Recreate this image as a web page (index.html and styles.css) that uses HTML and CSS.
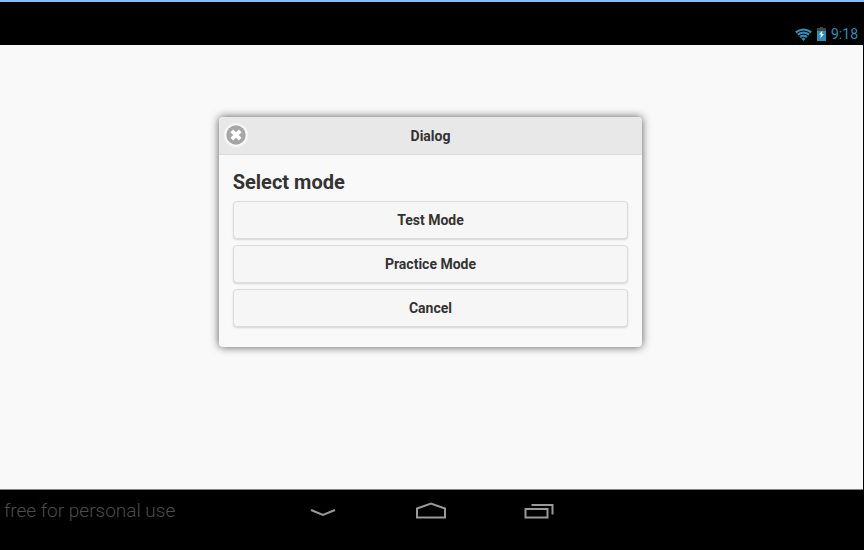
FILE: index.html
```html
<!DOCTYPE html>
<html lang="en">
<head>
<meta charset="utf-8">
<title>Dialog</title>
<link rel="stylesheet" href="styles.css">
</head>
<body>
<header class="status-bar">
  <svg class="wifi" viewBox="0 0 17 13" aria-hidden="true">
    <path class="wifi-fill" d="M0 3.6Q8.500-2.800 17 3.600L8.500 13Z"/>
    <path class="wifi-gap" d="M1.500 5.700Q8.500 0.400 15.500 5.700M3.500 8.200Q8.500 4 13.500 8.200M5.600 10.500Q8.500 8 11.400 10.500"/>
  </svg>
  <svg class="battery" viewBox="0 0 9 14" aria-hidden="true">
    <path fill="#454545" d="M3 0h3v1h3v4H0V1h3z"/>
    <path fill="#2e8fb5" d="M0 4h9v10H0z"/>
    <path fill="#e8f4f8" d="M5.500 3.500L2 7.500h2L3.200 11.500L7 7H5z"/>
  </svg>
  <time class="clock">9:18</time>
</header>
<main class="screen">
  <section class="dialog" role="dialog" aria-labelledby="dialog-title">
    <div class="dialog-header">
      <button class="close" type="button" aria-label="Close">
        <svg viewBox="0 0 24 24" aria-hidden="true">
          <circle cx="12" cy="12" r="12" fill="#f6f6f6"/>
          <circle cx="12" cy="12" r="9.700" fill="#a6a6a6"/>
          <path d="M7.800 7.800l8.400 8.400M16.200 7.800l-8.400 8.400" stroke="#fff" stroke-width="3.800"/>
        </svg>
      </button>
      <h1 class="dialog-title" id="dialog-title">Dialog</h1>
    </div>
    <div class="dialog-body">
      <h2 class="prompt">Select mode</h2>
      <div class="choices">
        <button class="choice" type="button">Test Mode</button>
        <button class="choice" type="button">Practice Mode</button>
        <button class="choice" type="button">Cancel</button>
      </div>
    </div>
  </section>
</main>
<footer class="nav-bar">
  <span class="license">free for personal use</span>
  <nav class="nav-keys" aria-label="System">
    <button class="key" type="button" aria-label="Back">
      <svg viewBox="0 0 32 20" aria-hidden="true"><path d="M4 9l12 5 12-5"/></svg>
    </button>
    <button class="key" type="button" aria-label="Home">
      <svg viewBox="0 0 32 20" aria-hidden="true"><path d="M2 16.500V7.500L16 2.500l14 5v9z"/></svg>
    </button>
    <button class="key" type="button" aria-label="Recent apps">
      <svg viewBox="0 0 32 20" aria-hidden="true"><path d="M2.500 8h22v8.500h-22zM8.500 4h21v9.500"/></svg>
    </button>
  </nav>
</footer>
</body>
</html>
```
FILE: styles.css
```css
* {
  box-sizing: border-box;
}

body {
  margin: 0;
  min-height: 100vh;
  display: flex;
  flex-direction: column;
  background: #000;
  font-family: Roboto, "Liberation Sans", sans-serif;
  color: #333;
}

button {
  font: inherit;
  color: inherit;
  padding: 0;
  cursor: pointer;
}

svg {
  display: block;
}

.status-bar {
  display: flex;
  justify-content: flex-end;
  align-items: center;
  padding: 23px 6px 2px;
  border-top: 2px solid #86bdf0;
}

.wifi {
  width: 17px;
  height: 13px;
  margin-right: 5px;
}

.wifi-fill {
  fill: #2e8fb5;
}

.wifi-gap {
  fill: none;
  stroke: #000;
  stroke-width: 1;
}

.battery {
  width: 9px;
  height: 14px;
  margin-right: 5px;
}

.clock {
  font-size: 14px;
  line-height: 18px;
  color: #2e8fb5;
}

.screen {
  flex: 1;
  margin-right: 1px;
  padding: 72px 2px 0 0;
  background: #f9f9f9;
  border-bottom: 1px solid #858585;
}

.dialog {
  width: 49.2%;
  margin: 0 auto;
  border-radius: 4px;
  background: #f9f9f9;
  box-shadow: 0 0 8px #555;
}

.dialog-header {
  display: grid;
  grid-template-columns: 24px 1fr 24px;
  align-items: center;
  padding: 0 5px;
  height: 38px;
  background: #e8e8e8;
  border-bottom: 1px solid #ddd;
  border-radius: 4px 4px 0 0;
}

.close {
  width: 24px;
  height: 26px;
  padding-bottom: 2px;
  border: 0;
  background: none;
}

.dialog-title {
  margin: 0;
  font-size: 14px;
  line-height: 18px;
  text-align: center;
}

.dialog-body {
  padding: 14px 14px 20px;
}

.prompt {
  margin: 0 0 6px;
  font-size: 20px;
  line-height: 26px;
}

.choices {
  display: grid;
  gap: 6px;
}

.choice {
  height: 38px;
  border: 1px solid #ddd;
  border-radius: 4px;
  background: #f6f6f6;
  box-shadow: 0 1px 2px rgba(0, 0, 0, 0.15);
  font-size: 14px;
  font-weight: 700;
}

.nav-bar {
  display: grid;
  grid-template-columns: 1fr 324px 1fr;
  align-items: center;
  padding: 6px 7px 24px 4px;
}

.license {
  font-size: 19px;
  line-height: 30px;
  font-weight: 300;
  color: #4c4c4c;
  white-space: nowrap;
}

.nav-keys {
  display: grid;
  grid-template-columns: repeat(3, 1fr);
}

.key {
  display: grid;
  justify-content: center;
  border: 0;
  background: none;
}

.key svg {
  width: 32px;
  height: 20px;
  fill: none;
  stroke: #999;
  stroke-width: 2;
}
```
